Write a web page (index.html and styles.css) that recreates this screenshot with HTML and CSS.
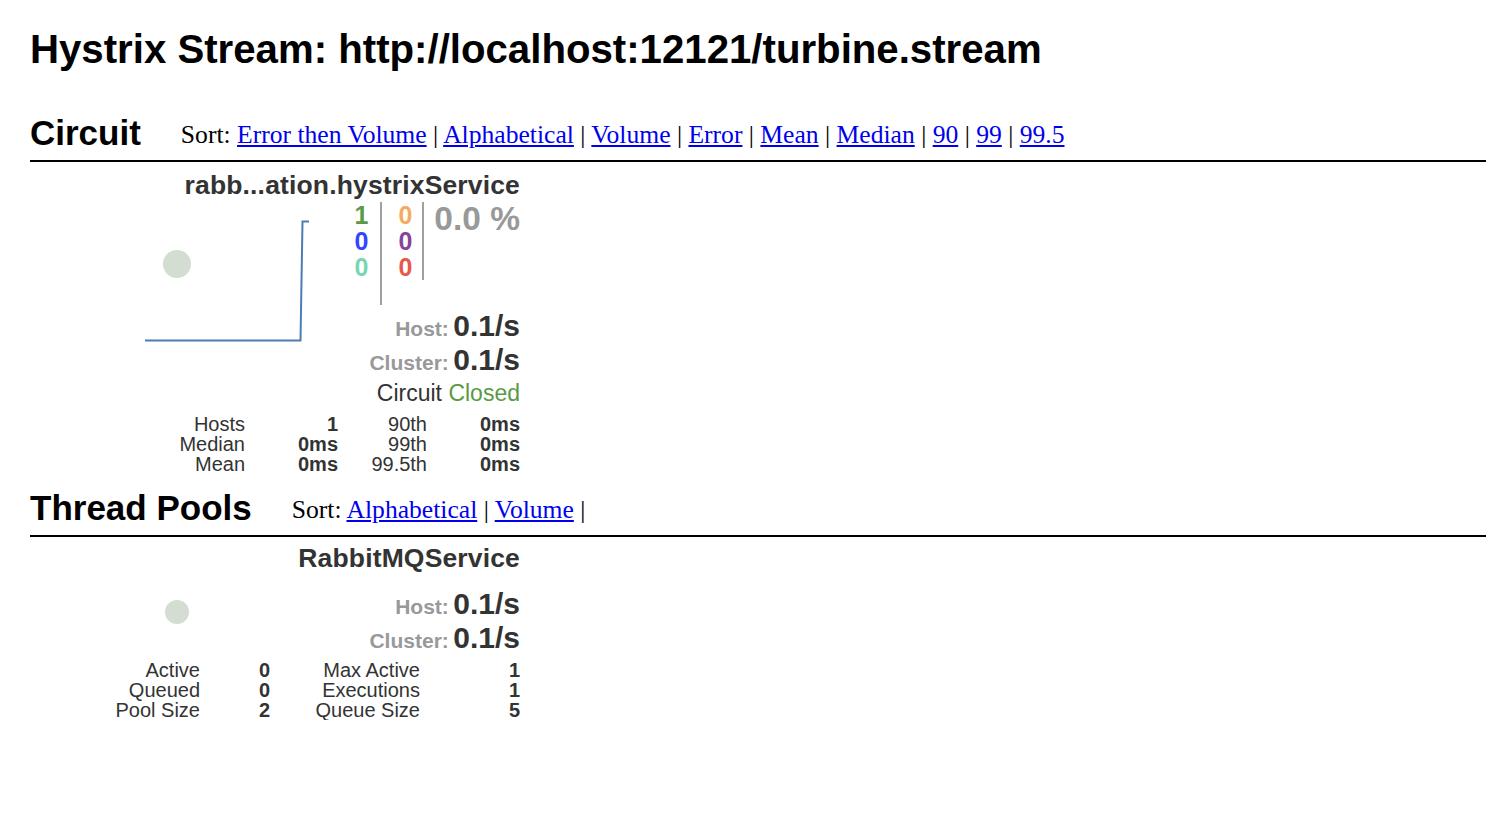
FILE: index.html
```html
<!DOCTYPE html>
<html>
<head>
<meta charset="utf-8">
<title>Hystrix Monitor</title>
<link rel="stylesheet" href="styles.css">
</head>
<body>
<h1 class="title">Hystrix Stream: http://localhost:12121/turbine.stream</h1>

<section class="section">
  <div class="section-head">
    <h2 class="section-title">Circuit</h2>
    <div class="sort">Sort: <a href="#">Error then Volume</a> | <a href="#">Alphabetical</a> | <a href="#">Volume</a> | <a href="#">Error</a> | <a href="#">Mean</a> | <a href="#">Median</a> | <a href="#">90</a> | <a href="#">99</a> | <a href="#">99.5</a></div>
  </div>

  <div class="monitor">
    <svg class="chart" width="320" height="200" viewBox="0 0 320 200">
      <circle cx="147" cy="94" r="14" fill="#d3ddd2"/>
      <path d="M115 170.5 L270.5 170.5 L272.5 51.5 L279 51.5" fill="none" stroke="#4b7cb4" stroke-width="2"/>
    </svg>
    <div class="name">rabb...ation.hystrixService</div>
    <div class="counters">
      <div class="col col1">
        <div class="c-green">1</div>
        <div class="c-blue">0</div>
        <div class="c-teal">0</div>
      </div>
      <div class="col col2">
        <div class="c-orange">0</div>
        <div class="c-purple">0</div>
        <div class="c-red">0</div>
      </div>
      <div class="percent">0.0 %</div>
    </div>
    <div class="rate"><span class="rate-label">Host:</span> <span class="rate-value">0.1/s</span></div>
    <div class="rate"><span class="rate-label">Cluster:</span> <span class="rate-value">0.1/s</span></div>
    <div class="status">Circuit <span class="closed">Closed</span></div>
    <div class="stats stats-circuit">
      <span class="lbl">Hosts</span><span class="val">1</span><span class="lbl">90th</span><span class="val">0ms</span>
      <span class="lbl">Median</span><span class="val">0ms</span><span class="lbl">99th</span><span class="val">0ms</span>
      <span class="lbl">Mean</span><span class="val">0ms</span><span class="lbl">99.5th</span><span class="val">0ms</span>
    </div>
  </div>
</section>

<section class="section">
  <div class="section-head">
    <h2 class="section-title">Thread Pools</h2>
    <div class="sort">Sort: <a href="#">Alphabetical</a> | <a href="#">Volume</a> |</div>
  </div>

  <div class="monitor monitor-pool">
    <svg class="chart" width="320" height="120" viewBox="0 0 320 120">
      <circle cx="147" cy="67" r="12" fill="#d3ddd2"/>
    </svg>
    <div class="name">RabbitMQService</div>
    <div class="pool-gap"></div>
    <div class="rate"><span class="rate-label">Host:</span> <span class="rate-value">0.1/s</span></div>
    <div class="rate"><span class="rate-label">Cluster:</span> <span class="rate-value">0.1/s</span></div>
    <div class="stats stats-pool">
      <span class="lbl">Active</span><span class="val">0</span><span class="lbl">Max Active</span><span class="val">1</span>
      <span class="lbl">Queued</span><span class="val">0</span><span class="lbl">Executions</span><span class="val">1</span>
      <span class="lbl">Pool Size</span><span class="val">2</span><span class="lbl">Queue Size</span><span class="val">5</span>
    </div>
  </div>
</section>
</body>
</html>
```

FILE: styles.css
```css
html, body {
  margin: 0;
  padding: 0;
  background: #ffffff;
}

body {
  padding: 27px 0 0 30px;
  font-family: "Liberation Sans", Arial, sans-serif;
  color: #000;
}

.title {
  margin: 0;
  font-size: 40.2px;
  line-height: 46px;
  font-weight: bold;
  color: #000;
}

.section-head {
  display: flex;
  align-items: baseline;
  margin-top: 40px;
  border-bottom: 2px solid #000;
  padding-bottom: 7px;
}

.section + .section .section-head {
  margin-top: 14px;
}

.section-title {
  margin: 0;
  font-size: 35px;
  line-height: 40px;
  font-weight: bold;
  color: #000;
  margin-right: 40px;
}

.sort {
  font-family: "Liberation Serif", "Times New Roman", serif;
  font-size: 25.6px;
  color: #000;
  position: relative;
  top: -2px;
}

.sort a {
  color: #0000ee;
  text-decoration: underline;
}

.monitor {
  position: relative;
  width: 490px;
  text-align: right;
  color: #333;
  padding-top: 9px;
}

.monitor-pool {
  padding-top: 7px;
}

.chart {
  position: absolute;
  left: 0;
  top: 8px;
}

.name {
  font-size: 26.5px;
  line-height: 28px;
  font-weight: bold;
  color: #333;
  letter-spacing: 0.15px;
  position: relative;
}

.counters {
  display: flex;
  justify-content: flex-end;
  align-items: flex-start;
  margin-top: 3px;
  position: relative;
}

.col {
  font-size: 25px;
  line-height: 26px;
  font-weight: bold;
  text-align: right;
  border-right: 2px solid #a0a0a0;
}

.col1 {
  height: 103px;
  padding-right: 12px;
}

.col2 {
  height: 78px;
  padding-left: 16px;
  padding-right: 10px;
}

.percent {
  font-size: 33.5px;
  line-height: 34px;
  font-weight: bold;
  color: #999;
  padding-left: 10px;
}

.c-green { color: #5b9a44; }
.c-blue { color: #3344ff; }
.c-teal { color: #78d6b1; }
.c-orange { color: #f5ab5c; }
.c-purple { color: #8b4299; }
.c-red { color: #e8574b; }

.rate {
  line-height: 34px;
  height: 34px;
  position: relative;
}

.counters + .rate {
  margin-top: 4px;
}

.rate-label {
  font-size: 21px;
  font-weight: bold;
  color: #999;
}

.rate-value {
  font-size: 30px;
  font-weight: bold;
  color: #333;
}

.status {
  font-size: 23px;
  line-height: 32px;
  color: #333;
}

.closed {
  color: #5b9a44;
}

.stats {
  display: grid;
  font-size: 20px;
  line-height: 20px;
  margin-top: 5px;
  color: #333;
}

.stats-circuit {
  grid-template-columns: 1fr 93px 89px 93px;
}

.stats-pool {
  grid-template-columns: 1fr 70px 150px 100px;
}

.lbl {
  font-weight: normal;
}

.val {
  font-weight: bold;
}

.pool-gap {
  height: 15px;
}
```
